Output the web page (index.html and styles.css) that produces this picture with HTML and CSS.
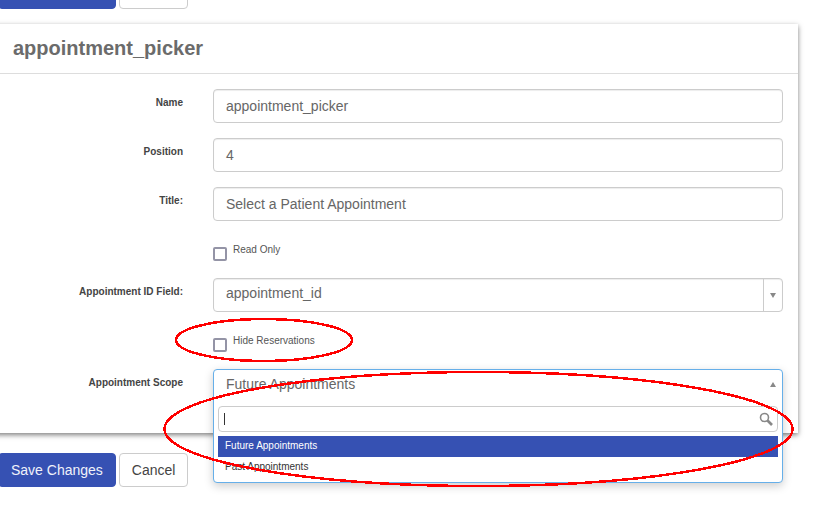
FILE: index.html
```html
<!DOCTYPE html>
<html lang="en">
<head>
    <meta charset="UTF-8">
    <title>appointment_picker</title>
    <link rel="stylesheet" href="styles.css">
</head>
<body>
    <div class="page">
        <div class="actions actions-top">
            <button class="btn btn-primary">Save Changes</button>
            <button class="btn">Cancel</button>
        </div>

        <div class="panel">
            <h2 class="panel-title">appointment_picker</h2>
            <div class="panel-body">
                <div class="row">
                    <label class="row-label">Name</label>
                    <div class="field">appointment_picker</div>
                </div>
                <div class="row">
                    <label class="row-label">Position</label>
                    <div class="field">4</div>
                </div>
                <div class="row">
                    <label class="row-label">Title:</label>
                    <div class="field">Select a Patient Appointment</div>
                </div>
                <div class="check-row">
                    <span class="checkbox"></span>
                    <span class="check-label">Read Only</span>
                </div>
                <div class="row">
                    <label class="row-label">Appointment ID Field:</label>
                    <div class="field field-select">
                        <span class="select-value">appointment_id</span>
                        <span class="select-arrow"><span class="arrow-down"></span></span>
                    </div>
                </div>
                <div class="check-row">
                    <span class="checkbox"></span>
                    <span class="check-label">Hide Reservations</span>
                </div>
                <div class="row row-scope">
                    <label class="row-label">Appointment Scope</label>
                    <div class="combo">
                        <div class="combo-head">
                            <span class="combo-value">Future Appointments</span>
                            <span class="arrow-up"></span>
                        </div>
                        <div class="combo-search">
                            <span class="caret"></span>
                            <svg class="search-icon" width="14" height="14" viewBox="0 0 14 14">
                                <circle cx="5.5" cy="5.5" r="4" fill="none" stroke="#888" stroke-width="1.6"/>
                                <path d="M8.5 8.5 L13 13" stroke="#888" stroke-width="2.6"/>
                            </svg>
                        </div>
                        <ul class="combo-list">
                            <li class="combo-item combo-item-active">Future Appointments</li>
                            <li class="combo-item">Past Appointments</li>
                        </ul>
                    </div>
                </div>
            </div>
        </div>

        <div class="actions">
            <button class="btn btn-primary">Save Changes</button>
            <button class="btn">Cancel</button>
        </div>
    </div>

    <svg class="marks" width="818" height="510" viewBox="0 0 818 510">
        <ellipse cx="264" cy="340" rx="88" ry="21"/>
        <ellipse cx="478.500" cy="429" rx="314" ry="57"/>
    </svg>
</body>
</html>
```

FILE: styles.css
```css
html, body {
    margin: 0;
    padding: 0;
    height: 510px;
    overflow: hidden;
    background: #fff;
}
body {
    position: relative;
    font-family: "Liberation Sans", Arial, sans-serif;
    color: #555;
}
.page {
    width: 798px;
    margin-top: -25px;
}
.actions {
    display: flex;
    gap: 3px;
    margin-left: -2px;
    height: 34px;
}
.actions-top {
    margin-bottom: 15px;
}
.btn {
    height: 34px;
    padding: 0 12px;
    border: 1px solid #ccc;
    border-radius: 4px;
    background: #fff;
    color: #444;
    font-family: inherit;
    font-size: 14px;
    white-space: nowrap;
}
.btn-primary {
    background: #3651b3;
    border-color: #3651b3;
    color: #f0f2fa;
}
.panel {
    margin-left: -10px;
    margin-bottom: 20px;
    width: 808px;
    height: 409px;
    background: #fff;
    box-shadow: 0 2px 5px rgba(0,0,0,0.5);
}
.panel-title {
    margin: 0;
    height: 49px;
    padding-left: 23px;
    border-bottom: 1px solid #ddd;
    font-size: 20px;
    line-height: 49px;
    font-weight: bold;
    color: #6b6b6b;
}
.panel-body {
    padding-top: 15px;
}
.row {
    display: flex;
    margin-bottom: 15px;
    height: 34px;
}
.row-label {
    width: 193px;
    padding-top: 8px;
    text-align: right;
    font-size: 10px;
    font-weight: bold;
    line-height: 12px;
    color: #444;
}
.field {
    box-sizing: border-box;
    width: 570px;
    height: 34px;
    margin-left: 30px;
    padding: 0 12px;
    border: 1px solid #ccc;
    border-radius: 4px;
    font-size: 14px;
    line-height: 32px;
    color: #666;
    box-shadow: inset 0 1px 1px rgba(0,0,0,0.075);
}
.field-select {
    display: flex;
    justify-content: space-between;
    padding-right: 0;
    line-height: 28px;
}
.select-arrow {
    width: 18px;
    border-left: 1px solid #ccc;
    display: flex;
    align-items: center;
    justify-content: center;
}
.arrow-down {
    border-left: 3px solid transparent;
    border-right: 3px solid transparent;
    border-top: 5px solid #888;
}
.arrow-up {
    align-self: flex-start;
    border-left: 3px solid transparent;
    border-right: 3px solid transparent;
    border-bottom: 5px solid #888;
    margin-top: 12px;
    margin-right: 2px;
}
.check-row {
    display: flex;
    margin-left: 223px;
    margin-top: 23px;
    height: 17px;
    margin-bottom: 17px;
}
.checkbox {
    box-sizing: border-box;
    width: 14px;
    height: 14px;
    margin-top: 3px;
    border: 2px solid #9494a6;
    border-radius: 2px;
}
.check-label {
    margin-left: 6px;
    margin-top: -1px;
    font-size: 10px;
    line-height: 14px;
    color: #555;
}
.row-scope {
    margin-bottom: 0;
}
.combo {
    position: relative;
    z-index: 2;
    box-sizing: border-box;
    width: 570px;
    height: 114px;
    margin-left: 30px;
    padding: 0 4px;
    background: #fff;
    border: 1px solid #66afe9;
    border-radius: 4px;
    box-shadow: 0 3px 10px rgba(0,0,0,0.2);
}
.combo-head {
    display: flex;
    justify-content: space-between;
    height: 36px;
    padding: 0 0 0 8px;
    font-size: 14px;
    line-height: 28px;
    color: #666;
}
.combo-search {
    box-sizing: border-box;
    display: flex;
    align-items: center;
    justify-content: space-between;
    height: 26px;
    padding: 0 4px 0 5px;
    border: 1px solid #ccc;
    border-radius: 4px;
}
.caret {
    width: 1px;
    height: 12px;
    background: #333;
}
.combo-list {
    list-style: none;
    margin: 4px 0 0;
    padding: 0;
}
.combo-item {
    height: 21px;
    padding-left: 7px;
    font-size: 10px;
    line-height: 20px;
    color: #333;
}
.combo-item-active {
    background: #3651b3;
    color: #fff;
}
.marks {
    position: absolute;
    left: 0;
    top: 0;
    z-index: 3;
    pointer-events: none;
}
.marks ellipse {
    fill: none;
    stroke: #f00;
    stroke-width: 2.5;
    shape-rendering: crispEdges;
}
```
